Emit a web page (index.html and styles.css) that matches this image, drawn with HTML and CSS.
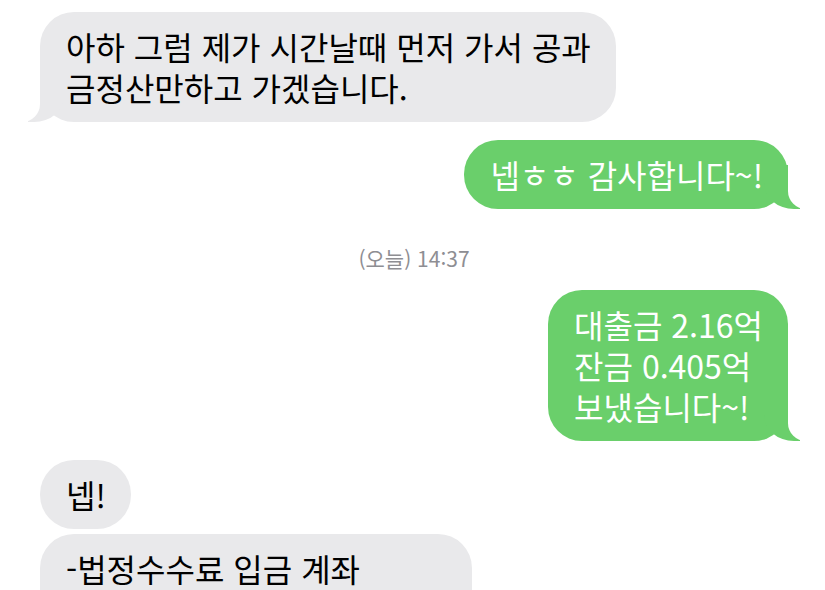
FILE: index.html
```html
<!DOCTYPE html>
<html lang="ko">
<head>
    <meta charset="UTF-8">
    <meta name="viewport" content="width=device-width, initial-scale=1.0">
    <title>메시지</title>
    <link rel="stylesheet" href="styles.css">
</head>
<body>

<div class="chat">
    <!-- 받은 메시지 -->
    <div class="bubble them tail">아하 그럼 제가 시간날때 먼저 가서 공과<br>금정산만하고 가겠습니다.</div>

    <!-- 보낸 메시지 -->
    <div class="bubble me tail gap-small">넵ㅎㅎ 감사합니다~!</div>

    <div class="stamp">(오늘) 14:37</div>

    <div class="bubble me tail after-stamp">대출금 2.16억<br>잔금 0.405억<br>보냈습니다~!</div>

    <div class="bubble them">넵!</div>
    <div class="bubble them grouped wide">-법정수수료 입금 계좌<br>&nbsp;</div>
</div>

</body>
</html>
```

FILE: styles.css
```css
/* Page */
html, body {
    margin: 0;
    height: 590px;
    overflow: hidden;
    background-color: #fff;
}

/* Chat column */
.chat {
    display: flex;
    flex-direction: column;
    padding: 12px 37px 0 40px;
    font-family: "Noto Sans CJK KR", "Noto Sans", sans-serif;
}

/* Bubbles */
.bubble {
    position: relative;
    max-width: 590px;
    padding: 14px 25px 14px 26px;
    font-size: 32px;
    line-height: 41px;
    border-radius: 34px;
    margin-top: 19px;
}

.bubble:first-child {
    margin-top: 0;
}

.them {
    align-self: flex-start;
    background-color: #e9e9eb;
    color: #000;
}

.me {
    align-self: flex-end;
    background-color: #6acf6b;
    color: #fff;
}

.gap-small {
    margin-top: 18px;
}

.after-stamp {
    margin-top: 20px;
}

.grouped {
    margin-top: 5px;
}

/* the rest of this message is below the fold */
.wide {
    box-sizing: border-box;
    min-width: 432px;
}

/* Tails */
.tail::before,
.tail::after {
    content: "";
    position: absolute;
    bottom: 0;
    height: 44px;
}

.me.tail::before {
    right: -12px;
    width: 36px;
    background-color: #6acf6b;
    border-bottom-left-radius: 30px 26px;
}

.me.tail::after {
    right: -46px;
    width: 46px;
    background-color: #fff;
    border-bottom-left-radius: 18px;
}

.them.tail::before {
    left: -12px;
    width: 36px;
    background-color: #e9e9eb;
    border-bottom-right-radius: 30px 26px;
}

.them.tail::after {
    left: -46px;
    width: 46px;
    background-color: #fff;
    border-bottom-right-radius: 18px;
}

/* Timestamp */
.stamp {
    align-self: center;
    margin-top: 37px;
    font-size: 21px;
    line-height: 24px;
    color: #8e8e93;
}
```
